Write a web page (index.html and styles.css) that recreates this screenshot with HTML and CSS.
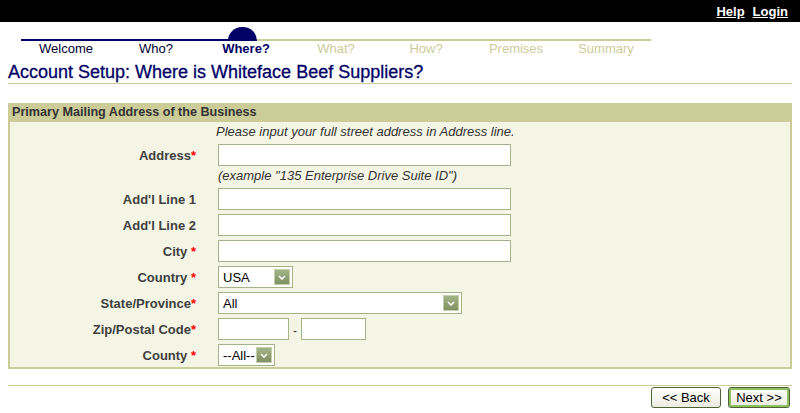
FILE: index.html
```html
<!DOCTYPE html>
<html lang="en">
<head>
  <meta charset="UTF-8" />
  <meta name="viewport" content="width=device-width, initial-scale=1.0" />
  <title>Account Setup - Where?</title>
  <link rel="stylesheet" href="styles.css">
</head>
<body>
  <header class="topbar">
    <a href="#help">Help</a>
    <a href="#login">Login</a>
  </header>

  <div class="page">
    <div class="progress">
      <div class="track"><span class="dot"></span></div>
      <ol class="steps">
        <li class="done">Welcome</li>
        <li class="done">Who?</li>
        <li class="current">Where?</li>
        <li>What?</li>
        <li>How?</li>
        <li>Premises</li>
        <li>Summary</li>
      </ol>
    </div>

    <h1 class="title">Account Setup: Where is Whiteface Beef Suppliers?</h1>

    <form class="panel">
      <div class="panel-head">Primary Mailing Address of the Business</div>

      <div class="row note">
        <span></span>
        <span class="hint top">Please input your full street address in Address line.</span>
      </div>
      <div class="row">
        <label for="addr">Address<span class="req">*</span></label>
        <input type="text" id="addr" class="field w-long" />
      </div>
      <div class="row note small">
        <span></span>
        <span class="hint">(example "135 Enterprise Drive Suite ID")</span>
      </div>
      <div class="row">
        <label for="line1">Add'l Line 1</label>
        <input type="text" id="line1" class="field w-long" />
      </div>
      <div class="row">
        <label for="line2">Add'l Line 2</label>
        <input type="text" id="line2" class="field w-long" />
      </div>
      <div class="row">
        <label for="city">City <span class="req">*</span></label>
        <input type="text" id="city" class="field w-long" />
      </div>
      <div class="row">
        <label for="country">Country <span class="req">*</span></label>
        <span class="select w-country">
          <select id="country"><option>USA</option><option>Canada</option></select>
          <span class="arrow"><svg width="8" height="5" viewBox="0 0 8 5"><path d="M1 1l3 3 3-3" fill="none" stroke="#fff" stroke-width="1.6"/></svg></span>
        </span>
      </div>
      <div class="row">
        <label for="state">State/Province<span class="req">*</span></label>
        <span class="select w-state">
          <select id="state"><option>All</option></select>
          <span class="arrow"><svg width="8" height="5" viewBox="0 0 8 5"><path d="M1 1l3 3 3-3" fill="none" stroke="#fff" stroke-width="1.6"/></svg></span>
        </span>
      </div>
      <div class="row">
        <label for="zip">Zip/Postal Code<span class="req">*</span></label>
        <span class="zip">
          <input type="text" id="zip" class="field w-zip" />
          <span class="dash">-</span>
          <input type="text" id="zip4" class="field w-zip4" />
        </span>
      </div>
      <div class="row">
        <label for="county">County <span class="req">*</span></label>
        <span class="select w-county">
          <select id="county"><option>--All--</option></select>
          <span class="arrow"><svg width="8" height="5" viewBox="0 0 8 5"><path d="M1 1l3 3 3-3" fill="none" stroke="#fff" stroke-width="1.6"/></svg></span>
        </span>
      </div>
    </form>

    <div class="actions">
      <button type="button" class="btn">&lt;&lt; Back</button>
      <button type="button" class="btn primary">Next &gt;&gt;</button>
    </div>
  </div>
</body>
</html>
```

FILE: styles.css
```css
body { margin: 0; font-family: "Liberation Sans", Arial, sans-serif; font-size: 13px; color: #333; background: #fff; }

.topbar { background: #000; height: 22px; display: flex; justify-content: flex-end; align-items: center; gap: 8px; padding-right: 12px; }
.topbar a { color: #fff; font-weight: bold; font-size: 13px; }

.page { padding: 0 8px; }

.progress { width: 630px; margin-left: 13px; padding-top: 5px; }
.track { position: relative; height: 14px; background: linear-gradient(to right, #000066 0 222px, #cccc99 222px) bottom / 100% 2px no-repeat; }
.dot { position: absolute; left: 207px; top: 0; width: 29px; height: 14px; border-radius: 15px 15px 0 0; background: #000066; }
.steps { list-style: none; margin: 0; padding: 0; display: grid; grid-template-columns: repeat(7, 90px); line-height: 16px; font-size: 13px; color: #cccc99; }
.steps li { text-align: center; }
.steps .done { color: #000033; }
.steps .current { color: #000066; font-weight: bold; }

.title { margin: 4px 0 0; font-size: 18px; line-height: 22px; font-weight: normal; color: #000066; border-bottom: 1px solid #cccc99; -webkit-text-stroke: 0.3px #000066; }

.panel { margin-top: 19px; border: 2px solid #cccc99; border-top: 0; background: #f5f5e6; padding-bottom: 1px; }
.panel-head { background: #cccc99; height: 19px; line-height: 19px; padding-left: 2px; font-weight: bold; font-size: 12.6px; color: #333; }

.row { display: grid; grid-template-columns: 186px 1fr; column-gap: 22px; align-items: center; margin-top: 4px; }
.row label { text-align: right; font-weight: bold; color: #404040; }
.req { color: #ff0000; }
.note { margin-top: 2px; line-height: 16px; }
.note.small { margin-top: 2px; }
.hint { font-style: italic; font-size: 13px; color: #333; }
.hint.top { margin-left: -2px; }

.field { box-sizing: border-box; height: 22px; border: 1px solid #a3b587; background: #fff; padding: 0 3px; font: 13px "Liberation Sans", Arial, sans-serif; }
.w-long { width: 293px; }
.w-zip { width: 71px; }
.w-zip4 { width: 65px; }
.zip { display: flex; align-items: center; gap: 4px; }
.dash { font-size: 12px; padding-top: 4px; }

.select { box-sizing: border-box; display: flex; align-items: stretch; height: 22px; border: 1px solid #a3b587; background: #fff; padding: 2px; }
.select select { flex: 1; min-width: 0; appearance: none; -webkit-appearance: none; border: 0; background: transparent; padding: 0 0 0 2px; font: 13px "Liberation Sans", Arial, sans-serif; color: #000; outline: none; }
.arrow { box-sizing: border-box; width: 16px; display: flex; align-items: center; justify-content: center; background: linear-gradient(#a3b487, #7f9162); border: 1px solid #c4cfae; }
.w-country { width: 75px; }
.w-state { width: 244px; }
.w-county { width: 57px; }

.actions { margin-top: 16px; border-top: 1px solid #cccc99; padding: 1px 2px 0 0; display: flex; justify-content: flex-end; gap: 7px; }
.btn { box-sizing: border-box; height: 21px; padding: 0; border: 1px solid #4f6233; border-radius: 3px; background: linear-gradient(#ffffff, #ecece0); font: 13px "Liberation Sans", Arial, sans-serif; color: #000; white-space: nowrap; }
.btn:first-child { width: 70px; }
.btn.primary { width: 62px; box-shadow: inset 0 0 0 2px #8cbf5e; }
```
